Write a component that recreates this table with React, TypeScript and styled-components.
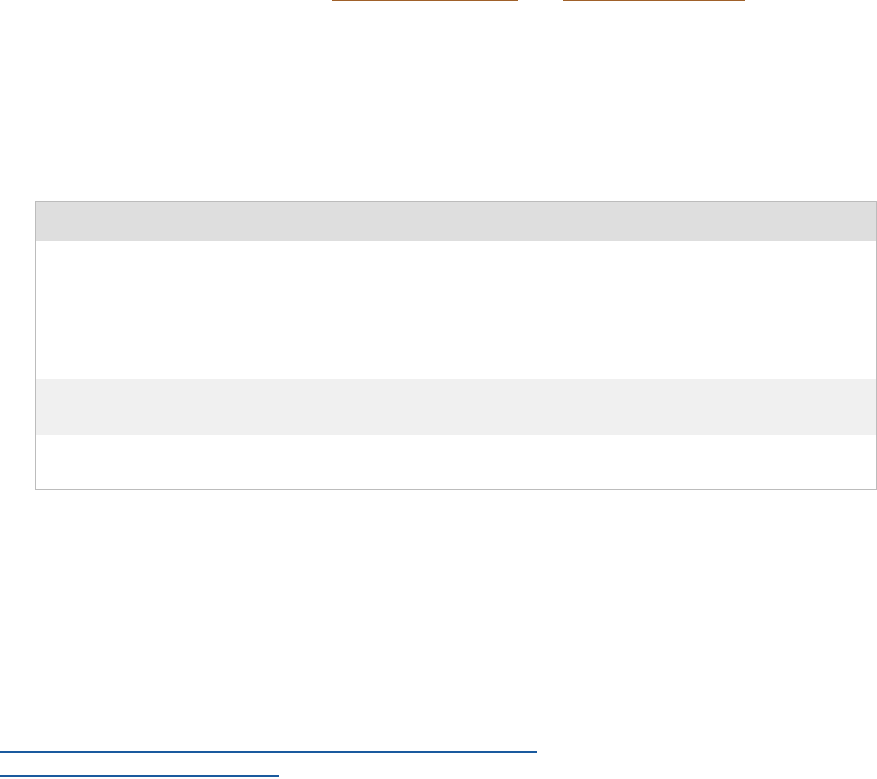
import React from "react";
import styled, { createGlobalStyle } from "styled-components";

const Global = createGlobalStyle`
  html, body {
    margin: 0;
    padding: 0;
    background: #ffffff;
  }
  body {
    font-family: "Liberation Sans", Arial, sans-serif;
    font-size: 14px;
    overflow: hidden;
  }
`;

const Page = styled.div`
  width: 877px;
  height: 779px;
  overflow: hidden;
`;

// only the underlines of the nav row show at the very top
const TopLinks = styled.nav`
  display: flex;
  gap: 45px;
  padding-left: 332px;
  height: 1px;
  align-items: flex-end;
`;

const NavLink = styled.a<{ $w: number }>`
  display: block;
  box-sizing: border-box;
  width: ${(p) => p.$w}px;
  height: 1px;
  line-height: 1px;
  font-size: 1px;
  overflow: hidden;
  white-space: nowrap;
  background: #a0612a;
  color: transparent;
  text-decoration: none;
`;

const Table = styled.table`
  margin: 200px 0 0 35px;
  width: 842px;
  border-collapse: collapse;
  border: 1px solid #bcbcbc;
`;

const HeadRow = styled.tr`
  background: #dedede;
  height: 39px;
`;

const Row = styled.tr<{ $h: number; $striped?: boolean }>`
  height: ${(p) => p.$h}px;
  background: ${(p) => (p.$striped ? "#f0f0f0" : "#ffffff")};
`;

const Cell = styled.td`
  padding: 0 12px;
  font-size: 14px;
  color: transparent;
`;

const HeadCell = styled.th`
  padding: 0 12px;
  font-size: 14px;
  color: transparent;
  text-align: left;
`;

const BottomLinks = styled.div`
  margin-top: 239px;
  display: flex;
  flex-direction: column;
`;

const FootLink = styled.a<{ $w: number }>`
  display: block;
  box-sizing: border-box;
  width: ${(p) => p.$w}px;
  height: 24px;
  line-height: 22px;
  font-size: 14px;
  overflow: hidden;
  white-space: nowrap;
  border-bottom: 2px solid #1a5a9e;
  color: transparent;
  text-decoration: none;
`;

export default function App() {
  return (
    <>
      <Global />
      <Page>
        <TopLinks>
          <NavLink href="#" $w={186}>
            link
          </NavLink>
          <NavLink href="#" $w={182}>
            link
          </NavLink>
        </TopLinks>
        <Table>
          <thead>
            <HeadRow>
              <HeadCell>&nbsp;</HeadCell>
            </HeadRow>
          </thead>
          <tbody>
            <Row $h={138}>
              <Cell>&nbsp;</Cell>
            </Row>
            <Row $h={56} $striped>
              <Cell>&nbsp;</Cell>
            </Row>
            <Row $h={55}>
              <Cell>&nbsp;</Cell>
            </Row>
          </tbody>
        </Table>
        <BottomLinks>
          <FootLink href="#" $w={537}>
            link
          </FootLink>
          <FootLink href="#" $w={279}>
            link
          </FootLink>
        </BottomLinks>
      </Page>
    </>
  );
}
